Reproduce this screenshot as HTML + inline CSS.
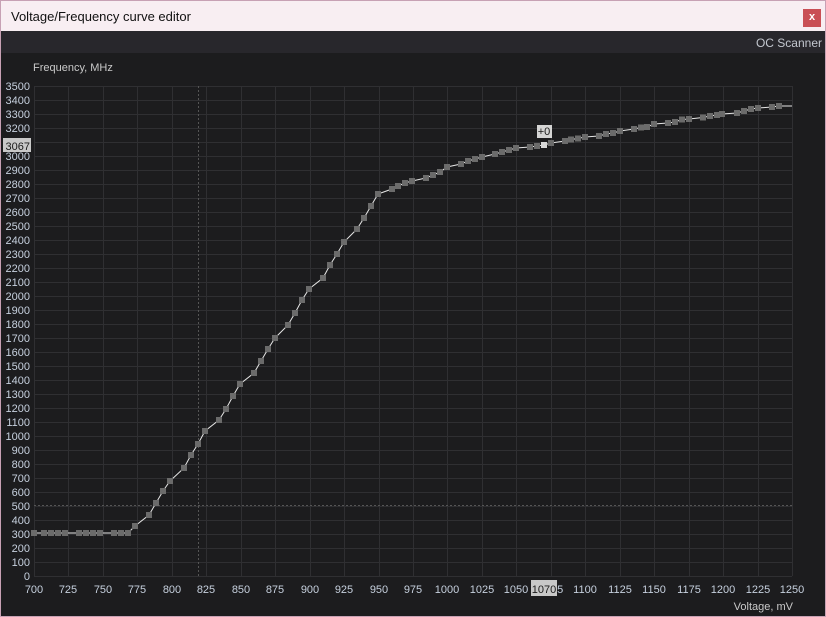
<!DOCTYPE html>
<html><head><meta charset="utf-8"><style>
html,body{margin:0;padding:0;width:826px;height:617px;overflow:hidden;background:#c9a3b6}
#win{position:absolute;left:0;top:0;width:824px;height:615px;border:1px solid #c7a1b4;background:#1c1c1e}
#title{position:absolute;left:0;top:0;width:824px;height:30px;background:#f8eef2;font:13px "Liberation Sans",sans-serif;color:#111}
#title span{position:absolute;left:10px;top:8px}
#close{position:absolute;right:4px;top:8px;width:18px;height:18px;background:#c94f55;color:#fff;font:bold 11px "Liberation Sans",sans-serif;text-align:center;line-height:17px}
#bar{position:absolute;left:0;top:30px;width:824px;height:22px;background:#28272c}
#bar span{position:absolute;right:3px;top:5px;font:12px "Liberation Sans",sans-serif;color:#c3c7cf}
svg{position:absolute;left:0;top:0}
text{font-family:"Liberation Sans",sans-serif;font-size:11px;fill:#c6d0de}
</style></head><body>
<div id="win">
<div id="title"><span>Voltage/Frequency curve editor</span><div id="close">x</div></div>
<div id="bar"><span>OC Scanner</span></div>
</div>
<svg width="826" height="617" viewBox="0 0 826 617">
<g id="grid"></g>
<line x1="198.5" y1="86" x2="198.5" y2="576" stroke="#555" stroke-dasharray="2,2"/>
<line x1="34" y1="505.5" x2="792" y2="505.5" stroke="#555" stroke-dasharray="2,2"/>
<g id="curve"></g>
<text x="33" y="71" style="fill:#c9c9c9">Frequency, MHz</text>
<text x="793" y="610" text-anchor="end" style="fill:#c9c9c9">Voltage, mV</text>
<g text-anchor="end">
<text x="30" y="90">3500</text><text x="30" y="104">3400</text><text x="30" y="118">3300</text><text x="30" y="132">3200</text>
<text x="30" y="174">2900</text><text x="30" y="188">2800</text><text x="30" y="202">2700</text><text x="30" y="216">2600</text>
<text x="30" y="230">2500</text><text x="30" y="244">2400</text><text x="30" y="258">2300</text><text x="30" y="272">2200</text>
<text x="30" y="286">2100</text><text x="30" y="300">2000</text><text x="30" y="314">1900</text><text x="30" y="328">1800</text>
<text x="30" y="342">1700</text><text x="30" y="356">1600</text><text x="30" y="370">1500</text><text x="30" y="384">1400</text>
<text x="30" y="398">1300</text><text x="30" y="412">1200</text><text x="30" y="426">1100</text><text x="30" y="440">1000</text>
<text x="30" y="454">900</text><text x="30" y="468">800</text><text x="30" y="482">700</text><text x="30" y="496">600</text>
<text x="30" y="510">500</text><text x="30" y="524">400</text><text x="30" y="538">300</text><text x="30" y="552">200</text>
<text x="30" y="566">100</text><text x="30" y="580">0</text>
<text x="30" y="160">3000</text>
</g>
<rect x="3" y="138" width="28" height="14" fill="#c8c8c8"/>
<text x="30" y="150" text-anchor="end" style="fill:#1a1a1a">3067</text>
<g text-anchor="middle">
<text x="34" y="593">700</text><text x="68" y="593">725</text><text x="103" y="593">750</text><text x="137" y="593">775</text>
<text x="172" y="593">800</text><text x="206" y="593">825</text><text x="241" y="593">850</text><text x="275" y="593">875</text>
<text x="310" y="593">900</text><text x="344" y="593">925</text><text x="379" y="593">950</text><text x="413" y="593">975</text>
<text x="447" y="593">1000</text><text x="482" y="593">1025</text><text x="516" y="593">1050</text><text x="551" y="593">1075</text>
<text x="585" y="593">1100</text><text x="620" y="593">1125</text><text x="654" y="593">1150</text><text x="689" y="593">1175</text>
<text x="723" y="593">1200</text><text x="758" y="593">1225</text><text x="792" y="593">1250</text>
</g>
<rect x="531" y="580" width="26" height="16" fill="#c8c8c8"/>
<text x="544" y="593" text-anchor="middle" style="fill:#1a1a1a">1070</text>
<rect x="537" y="125" width="15" height="13" fill="#d4d4d4"/>
<text x="544" y="135" text-anchor="middle" style="fill:#1a1a1a">+0</text>
</svg>
<script>
var ns="http://www.w3.org/2000/svg",g=document.getElementById('grid'),c=document.getElementById('curve');
function el(p,t,a){var e=document.createElementNS(ns,t);for(var k in a)e.setAttribute(k,a[k]);p.appendChild(e);return e;}
for(var i=0;i<=22;i++){var x=Math.round(34+i*758/22)+.5;el(g,'line',{x1:x,y1:86,x2:x,y2:576,stroke:'#2f2f32'});}
for(var j=0;j<=35;j++){var y=576-j*14+.5;el(g,'line',{x1:34,y1:y,x2:792,y2:y,stroke:'#2f2f32'});}
var P=[[34,533],[44,533],[51,533],[58,533],[65,533],[79,533],[86,533],[93,533],[100,533],[114,533],[121,533],[128,533],[135,526],[149,515],[156,503],[163,491],[170,481],[184,468],[191,455],[198,444],[205,431],[219,420],[226,409],[233,396],[240,384],[254,373],[261,361],[268,349],[275,338],[288,325],[295,313],[302,300],[309,289],[323,278],[330,265],[337,254],[344,242],[357,229],[364,218],[371,206],[378,194],[392,189],[398,186],[405,183],[412,181],[426,178],[433,175],[440,172],[447,167],[461,164],[468,161],[475,159],[482,157],[495,154],[502,152],[509,150],[516,148],[530,147],[537,146],[544,145],[551,143],[565,141],[571,139.5],[578,138.5],[585,137],[599,136],[606,134],[613,133],[620,131],[634,129],[641,127.5],[647,127],[654,124],[668,123],[675,122],[682,119.5],[689,119],[703,117.5],[710,116],[717,115],[722,114],[737,113],[744,111],[751,109],[758,108],[772,107],[779,106]];
var d='M'+P.map(function(p){return p.join(',')}).join(' L')+' L792,106';
el(c,'path',{d:d,fill:'none',stroke:'#e6e6e6','stroke-width':1});
P.forEach(function(p,i){el(c,'rect',{x:p[0]-3,y:p[1]-3,width:6,height:6,fill:p[0]==544?'#d8d8d8':'#6b6b6b'});});
</script>
</body></html>
